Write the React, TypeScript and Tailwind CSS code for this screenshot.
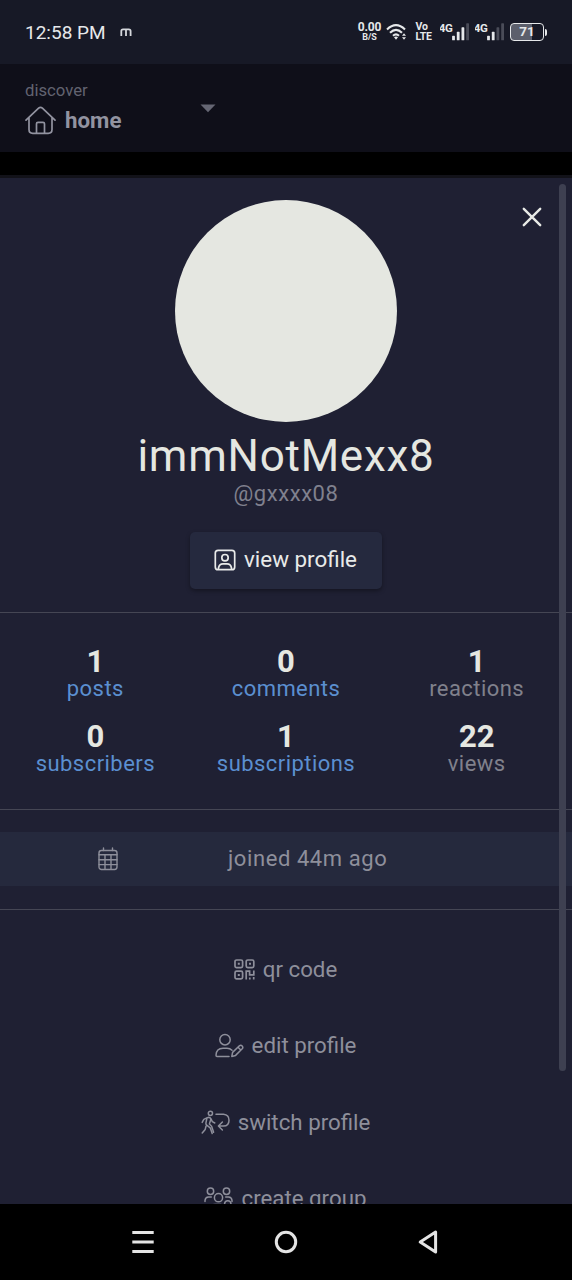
import type { ReactNode } from 'react';

const stats = [
  { value: '1', label: 'posts', link: true },
  { value: '0', label: 'comments', link: true },
  { value: '1', label: 'reactions', link: false },
  { value: '0', label: 'subscribers', link: true },
  { value: '1', label: 'subscriptions', link: true },
  { value: '22', label: 'views', link: false },
];

function Signal({ bars }: { bars: number }) {
  return (
    <svg width="30" height="20" viewBox="0 0 30 20" className="shrink-0">
      <text x="-1.2" y="9.5" fontSize="11.5" fontWeight="700" fill="#e6e8ea" letterSpacing="-0.4">4G</text>
      {[4.5, 8.5, 13, 17].map((h, i) => (
        <rect key={h} x={12.1 + i * 4.7} y={18.3 - h} width="2.8" height={h} rx="0.6" fill={i < bars ? '#e6e8ea' : '#4a4c58'} />
      ))}
    </svg>
  );
}

function StatusBar() {
  return (
    <div className="flex h-16 shrink-0 items-center bg-[#171926] pl-[25px] pr-[25px] text-[#e6e8ea]">
      <span className="mt-px text-[19px] leading-6">12:58 PM</span>
      <svg width="12" height="9" viewBox="0 0 12 9" className="ml-[14px]" fill="none" stroke="#d5d7dc" strokeWidth="1.8">
        <path d="M1.3 8V3.2Q1.3 1.4 3 1.4H8.8Q10.6 1.4 10.6 3.2V8M6 1.4V8" />
      </svg>
      <div className="ml-auto flex items-center">
        <div className="flex w-[24px] flex-col items-center text-center font-bold">
          <span className="text-[12px] leading-[11px] -tracking-[0.1px]">0.00</span>
          <span className="text-[9px] leading-[9px]">B/S</span>
        </div>
        <svg width="22" height="18" viewBox="0 0 22 18" className="ml-[4px]" fill="none" stroke="#e6e8ea" strokeWidth="2.1">
          <path d="M1 6.4Q10 -2.2 19 6.4M4 9.8Q10 4 16 9.8M7 12.8Q10 10 13 12.8" />
          <path d="M8 14.2L10 16.8L12 14.2Q10 12.8 8 14.2Z" fill="#e6e8ea" stroke="none" />
          <path d="M16 12.8L18 10.2L20 12.8ZM16 14.2L18 16.8L20 14.2Z" fill="#e6e8ea" stroke="none" />
        </svg>
        <div className="ml-[8px] flex w-[17px] flex-col text-[10.5px] font-bold leading-[10px]">
          <span>Vo</span>
          <span className="-tracking-[0.3px]">LTE</span>
        </div>
        <div className="ml-[7px] mr-[2px] flex gap-[5.5px]">
          <Signal bars={3} />
          <Signal bars={2} />
        </div>
        <div className="ml-[3px] flex h-[18px] w-[34px] items-center justify-center rounded-[4px] border-[1.5px] border-[#e6e8ea] bg-linear-to-r from-[#5c5f6c] from-65% to-[#171926] to-65% text-[13.5px] font-bold leading-none">71</div>
        <div className="ml-px h-[7px] w-[2px] rounded-r bg-[#e6e8ea]" />
      </div>
    </div>
  );
}

function Header() {
  return (
    <div className="flex h-[88px] shrink-0 bg-[#0f0f19] pl-[25px] pt-[17px]">
      <div className="w-[175px]">
        <div className="text-[16.7px] leading-5 text-[#626370]">discover</div>
        <div className="flex items-start text-[#9293a0]">
          <svg width="31" height="30" viewBox="0 0 31 30" className="mt-[4px]" fill="none" stroke="currentColor" strokeWidth="1.7" strokeLinecap="round" strokeLinejoin="round">
            <path d="M1 15.2L13.6 3.2Q15.5 1.4 17.4 3.2L30 15.2M4 13V24.5Q4 28.3 7.8 28.3H23.2Q27 28.3 27 24.5V13" />
            <path d="M11.5 28V18.8Q11.5 17.3 13 17.3H18Q19.5 17.3 19.5 18.8V28" />
          </svg>
          <span className="ml-[9px] text-[22.3px] font-bold leading-[38px]">home</span>
        </div>
      </div>
      <svg width="16" height="9" viewBox="0 0 16 9" className="mt-[23px]">
        <path d="M0.5 0.5H15.5L8 8.3Z" fill="#656673" />
      </svg>
    </div>
  );
}

function PortraitIcon() {
  return (
    <svg width="22" height="22" viewBox="0 0 22 22" fill="none" stroke="currentColor" strokeWidth="1.7">
      <rect x="1.3" y="1.3" width="19.4" height="19.4" rx="2.8" />
      <circle cx="11" cy="8.7" r="3.2" />
      <path d="M4.5 20.5V19Q5.2 14.8 9 14.8H13Q16.8 14.8 17.5 19V20.5" />
    </svg>
  );
}

function CalendarIcon() {
  return (
    <svg width="20" height="24" viewBox="0 0 20 24" fill="none" stroke="currentColor" strokeWidth="1.4" strokeLinecap="round">
      <rect x="1" y="3.5" width="18" height="19" rx="2.4" />
      <path d="M5.5 1V3.5M14.5 1V3.5M1 7.8H19M1 12.8H19M1 17.6H19M7 8V22.3M13 8V22.3" />
    </svg>
  );
}

function QrIcon() {
  return (
    <svg width="21" height="21" viewBox="0 0 21 21" fill="none" stroke="currentColor" strokeWidth="1.7">
      <rect x="1" y="1" width="7.6" height="7.6" rx="1.6" />
      <rect x="12.2" y="1" width="7.6" height="7.6" rx="1.6" />
      <rect x="1" y="12.2" width="7.6" height="7.6" rx="1.6" />
      <path d="M3.8 4.8H5.8M15 4.8H17M3.8 16H5.8" strokeWidth="2" />
      <path d="M12.2 20.5V12.2H15.6V15.8H19.8V11.5M15.8 18.4V20.5M19.7 18V20.5" />
    </svg>
  );
}

function EditIcon() {
  return (
    <svg width="29" height="25" viewBox="0 0 29 25" fill="none" stroke="currentColor" strokeWidth="1.5" strokeLinejoin="round" strokeLinecap="round">
      <circle cx="10" cy="6.7" r="5.2" />
      <path d="M14 23.4H2Q1 23.4 1 22.2Q1.3 15.2 8 15.2H12Q15 15.2 17 17.2" />
      <path d="M16.8 23.4L17.6 19.4L24.4 12.8Q25.8 11.7 27.2 13Q28.4 14.4 27.2 15.8L20.6 22.4Z M23 14.2L25.8 17" />
    </svg>
  );
}

function SwitchIcon() {
  return (
    <svg width="29" height="25" viewBox="0 0 29 25" fill="none" stroke="currentColor" strokeWidth="1.5" strokeLinejoin="round" strokeLinecap="round">
      <circle cx="9.4" cy="3.3" r="2.1" />
      <path d="M1.2 12.4L2.8 9.4L6.4 7.6Q8.8 6.8 10 8.8L11.3 11.6L13.8 13" />
      <path d="M5.8 8.6L4.9 13.2Q4.8 14.6 6 15.4L9.2 17.8L11.2 23.6M9.8 9.4L8.4 14L10.6 16.2L12.6 22.2M5 16.2L4.2 19.4L1.2 23" />
      <path d="M15 4.3H22.5Q28 4.8 28 10.2Q28 16 22.5 16H17.5M21.4 12L17.4 16L21.4 20" />
    </svg>
  );
}

function GroupIcon() {
  return (
    <svg width="29" height="25" viewBox="0 0 29 25" className="mt-px" fill="none" stroke="currentColor" strokeWidth="1.5" strokeLinecap="round">
      <circle cx="6.5" cy="4.3" r="3.2" />
      <circle cx="22.5" cy="4.3" r="3.2" />
      <circle cx="14.5" cy="10.7" r="4.1" />
      <path d="M1 14.5V13.5Q1.2 10.2 4.5 10H7.3M28 14.5V13.5Q27.8 10.2 24.5 10H21.7" />
      <path d="M6 23V22Q6.4 17.5 11 17.5H17" />
      <path d="M20.5 18.5V17Q20.8 13.8 23.8 13.8Q26.8 13.8 27 17V18.5" />
    </svg>
  );
}

function MenuItem({ icon, label }: { icon: ReactNode; label: string }) {
  return (
    <button className="flex h-[76.3px] w-full shrink-0 items-center justify-center gap-[8px] pr-px text-[22.3px] leading-7 text-[#8e8f9b]">
      {icon}
      <span className="pb-px">{label}</span>
    </button>
  );
}

function ProfilePanel() {
  return (
    <div className="relative flex h-[1026px] shrink-0 flex-col items-center overflow-hidden bg-[#1f2033] pt-[22px]">
      <button className="absolute right-[30px] top-[29px]" aria-label="close">
        <svg width="20" height="20" viewBox="0 0 20 20" fill="none" stroke="#e8eae6" strokeWidth="2.4" strokeLinecap="round">
          <path d="M1.8 1.8L18.2 18.2M18.2 1.8L1.8 18.2" />
        </svg>
      </button>
      <div className="size-[222px] shrink-0 rounded-full bg-[#e5e7e1]" />
      <h1 className="mt-[12px] text-[44px] leading-[44px] tracking-[0.75px] text-[#e5e7e1]">immNotMexx8</h1>
      <div className="mt-[3px] text-[22px] leading-[26px] tracking-[0.55px] text-[#80818e]">@gxxxx08</div>
      <button className="mt-[25px] flex h-[57px] w-[192px] shrink-0 items-center justify-center gap-[8px] rounded-[5px] bg-[#25293e] pb-px pr-px text-[22.4px] text-[#e8eae9] shadow-[0_2px_4px_rgba(0,0,0,0.35)]">
        <PortraitIcon />
        <span>view profile</span>
      </button>
      <div className="mt-[23px] h-[198px] w-full shrink-0 border-y border-[#454654] pt-[34px]">
        <div className="grid grid-cols-3 gap-y-[20px] text-center">
          {stats.map((s) => (
            <div key={s.label}>
              <div className="h-[29px] text-[31px] font-bold leading-[29px] text-[#e5e7e1]">{s.value}</div>
              <div className={s.link ? 'text-[22px] leading-[26px] tracking-[0.45px] text-[#5b8fd0]' : 'text-[22px] leading-[26px] tracking-[0.45px] text-[#80818c]'}>{s.label}</div>
            </div>
          ))}
        </div>
      </div>
      <div className="w-full shrink-0 border-b border-[#454654] pb-[23px] pt-[22px]">
        <div className="flex h-[54px] items-center bg-[#25293d] text-[22px] tracking-[0.58px] text-[#8e8f9b]">
          <div className="flex w-[216px] justify-center">
            <CalendarIcon />
          </div>
          <span className="ml-[12px] pb-px">joined 44m ago</span>
        </div>
      </div>
      <div className="w-full shrink-0 pt-[21.5px]">
        <MenuItem icon={<QrIcon />} label="qr code" />
        <MenuItem icon={<EditIcon />} label="edit profile" />
        <MenuItem icon={<SwitchIcon />} label="switch profile" />
        <MenuItem icon={<GroupIcon />} label="create group" />
      </div>
      <div className="absolute right-[6px] top-[6px] h-[887px] w-[7px] rounded-full bg-[#3e4051]" />
    </div>
  );
}

function NavBar() {
  return (
    <div className="flex flex-1 items-center justify-between bg-black px-[131px]">
      <svg width="24" height="26" viewBox="0 0 24 26" stroke="#e4e4e4" strokeWidth="3">
        <path d="M1.3 3.5H22.7M1.3 13H22.7M1.3 22.5H22.7" />
      </svg>
      <svg width="24" height="26" viewBox="0 0 24 26" fill="none" stroke="#e4e4e4" strokeWidth="3">
        <circle cx="12" cy="13" r="9.7" />
      </svg>
      <svg width="24" height="26" viewBox="0 0 24 26" fill="none" stroke="#e4e4e4" strokeWidth="3" strokeLinejoin="round">
        <path d="M18.6 3V23L3.2 13Z" />
      </svg>
    </div>
  );
}

export default function App() {
  return (
    <div className="flex h-[1280px] w-[572px] flex-col overflow-hidden bg-black font-['Roboto',sans-serif]">
      <StatusBar />
      <Header />
      <div className="h-[26px] shrink-0 border-b-[3px] border-[#121219] bg-black" />
      <ProfilePanel />
      <NavBar />
    </div>
  );
}
